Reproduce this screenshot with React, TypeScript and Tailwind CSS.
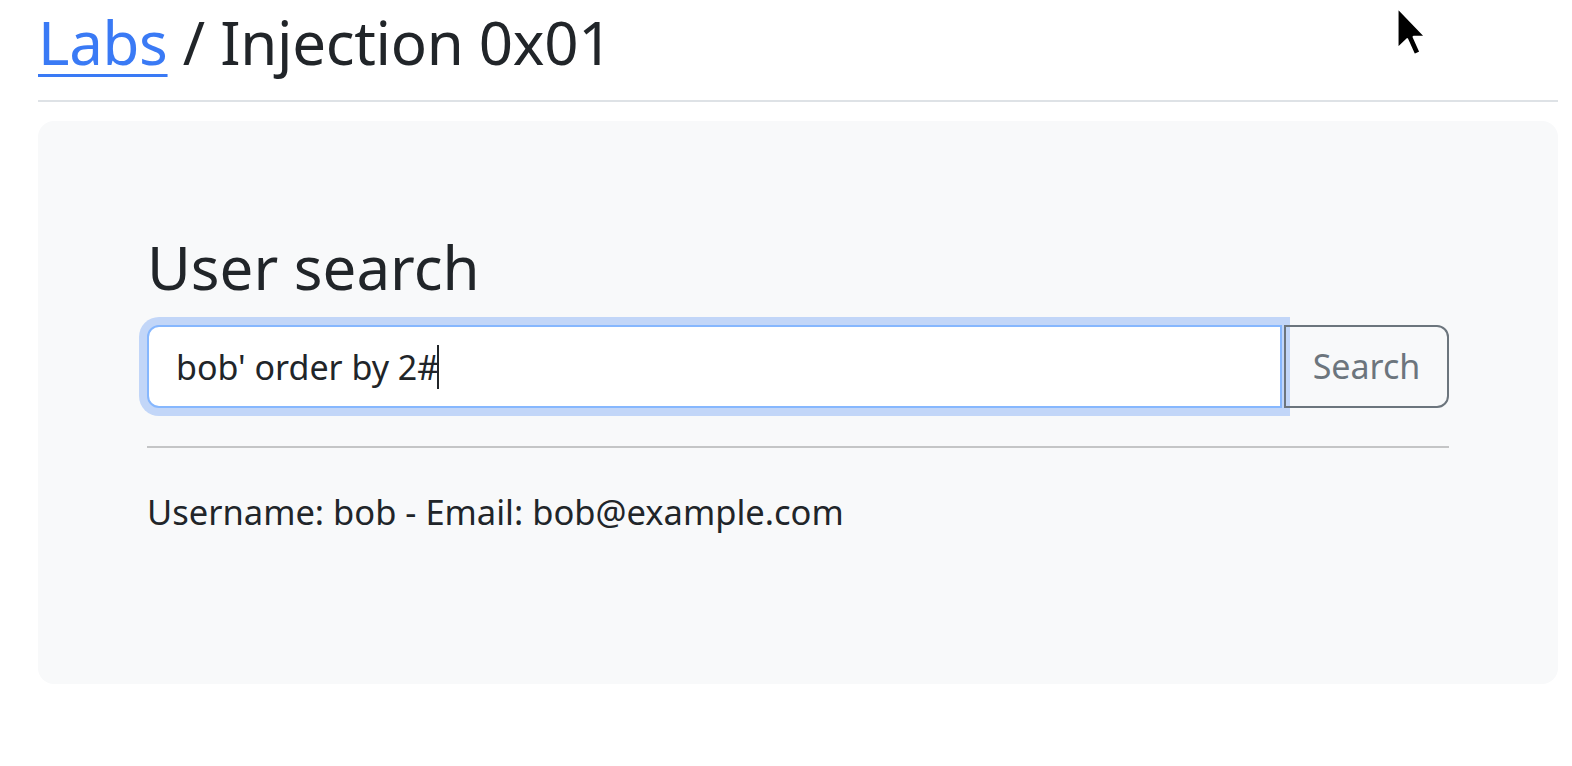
import React from "react";

function Cursor() {
  return (
    <svg
      className="absolute left-[1395px] top-[5px]"
      width="33"
      height="54"
      viewBox="0 0 13 21"
    >
      <path
        d="M1 1 L1 17 L4.8 13.3 L7.6 19.5 L10 18.4 L7.3 12.4 L12 12.4 Z"
        fill="#000"
        stroke="#fff"
        strokeWidth="0.8"
        strokeLinejoin="round"
      />
    </svg>
  );
}

export default function App() {
  return (
    <div
      className="relative min-h-[766px] w-[1572px] bg-white text-[#212529]"
      style={{ fontFamily: '"Noto Sans", "Open Sans", sans-serif' }}
    >
      <div className="pl-[38px] pr-[14px]">
        <div className="border-b-2 border-[#dee2e6] pb-[22px] pt-[6px]">
          <h1 className="text-[60px] leading-[72px] font-normal tracking-[-0.3px]">
            <a href="#" className="text-[#3a7af5] underline decoration-[3px] underline-offset-[9px]">
              Labs
            </a>{" "}
            / Injection 0x01
          </h1>
        </div>
        <div className="mt-[19px] rounded-[16px] bg-[#f8f9fa] px-[109px] pb-[146px] pt-[110px]">
          <h2 className="text-[60px] leading-[72px] font-normal">User search</h2>
          <div className="mt-[22px] flex">
            <div className="relative z-10 flex-1">
              <input
                readOnly
                value="bob' order by 2#"
                className="h-[83px] w-full rounded-l-[12px] border-2 border-[#86b7fe] bg-white px-[27px] text-[34px] text-[#212529] shadow-[0_0_0_8px_#c2d6f8] outline-none"
              />
              <span className="pointer-events-none absolute left-[290px] top-[20px] h-[44px] w-[2px] bg-[#212529]" />
            </div>
            <button className="relative z-20 ml-[2px] h-[83px] w-[165px] rounded-r-[12px] border-2 border-[#6c757d] bg-transparent text-[34px] text-[#6c757d]">
              Search
            </button>
          </div>
          <hr className="mt-[38px] border-t-2 border-[#c4c5c6]" />
          <p className="mt-[38px] text-[34.5px] leading-[52px]">
            Username: bob - Email: bob@example.com
          </p>
        </div>
      </div>
      <Cursor />
    </div>
  );
}
